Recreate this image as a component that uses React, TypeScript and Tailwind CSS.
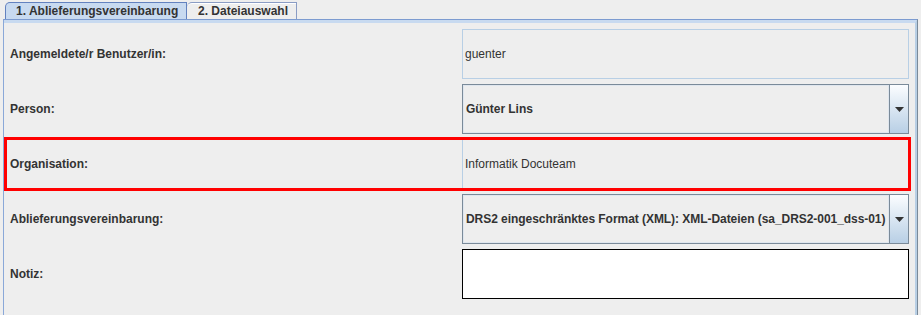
import React from 'react';

const font = { fontFamily: '"Liberation Sans", Arial, sans-serif' };

function ComboBox({ value }: { value: string }) {
  return (
    <div className="flex h-[50px] border border-[#7a8a99] bg-[#eeeeee]">
      <div className="flex min-w-0 flex-1 items-center overflow-hidden whitespace-nowrap border border-[#dfe6ee] pl-[2px] text-[12px] font-bold tracking-[-0.05px] text-[#333333]">
        {value}
      </div>
      <div className="flex w-[19px] items-center justify-center border-l border-[#7a8a99] bg-gradient-to-b from-[#fbfdff] to-[#b8cfe5]">
        <svg width="9" height="5" viewBox="0 0 9 5">
          <path d="M0 0h9L4.5 5z" fill="#333333" />
        </svg>
      </div>
    </div>
  );
}

function TextField({ value }: { value: string }) {
  return (
    <div className="flex h-[50px] items-center border border-[#b8cfe5] pl-[2px] text-[12px] text-[#333333]">
      {value}
    </div>
  );
}

function Label({ children }: { children: React.ReactNode }) {
  return <div className="flex h-[50px] items-center whitespace-nowrap text-[12px] font-bold text-[#333333]">{children}</div>;
}

export default function App() {
  return (
    <div className="h-[315px] w-[921px] overflow-hidden bg-[#eeeeee]" style={font}>
      {/* Tabs */}
      <div className="flex h-[19px] items-end pl-[5px]">
        <div className="flex h-[17px] w-[182px] items-center whitespace-nowrap rounded-tl-[5px] border border-b-0 border-[#6382bf] bg-[#c8daf0] pl-[10px] text-[12px] font-bold text-[#333333]">
          1. Ablieferungsvereinbarung
        </div>
        <div className="flex h-[17px] w-[110px] items-center whitespace-nowrap rounded-tl-[5px] border border-b-0 border-l-0 border-[#8a9cc4] bg-[#eeeeee] pl-[11px] text-[12px] font-bold text-[#333333] shadow-[inset_0_1px_0_#ffffff]">
          2. Dateiauswahl
        </div>
      </div>

      {/* Content panel */}
      <div className="ml-[3px] h-[296px] w-[915px] border-l border-r border-t border-l-[#8aa8d8] border-r-[#7a8a99] border-t-[#7c9bd0]">
        <div className="h-full border-r-2 border-t-[3px] border-r-[#b8cfe5] border-t-[#c8daf0] pl-[6px] pt-[6px]">
          <div className="grid grid-cols-[452px_447px] gap-y-[5px]">
            <Label>Angemeldete/r Benutzer/in:</Label>
            <TextField value="guenter" />

            <Label>Person:</Label>
            <ComboBox value="Günter Lins" />

            <div className="relative col-span-2 grid grid-cols-[452px_447px]">
              <Label>Organisation:</Label>
              <TextField value="Informatik Docuteam" />
              <div className="pointer-events-none absolute -bottom-[2px] -left-[6px] -right-[2px] -top-[2px] border-[3px] border-[#ff0000]" />
            </div>

            <Label>Ablieferungsvereinbarung:</Label>
            <ComboBox value="DRS2 eingeschränktes Format (XML): XML-Dateien (sa_DRS2-001_dss-01)" />

            <Label>Notiz:</Label>
            <div className="h-[50px] border border-black bg-white" />
          </div>
        </div>
      </div>
    </div>
  );
}
